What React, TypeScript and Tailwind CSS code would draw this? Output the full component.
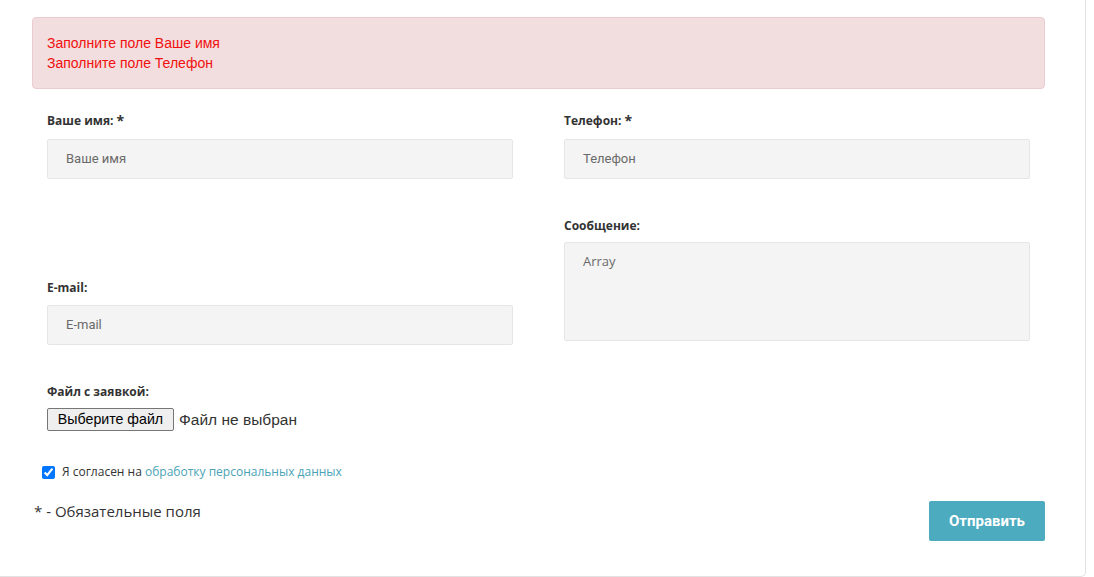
import React from "react";

const labelCls =
  "block h-[18px] leading-[18px] text-[12px] font-bold text-[#333] [font-family:'Open_Sans',sans-serif]";
const inputCls =
  "h-[40px] w-full bg-[#f4f4f4] border border-[#e6e6e6] rounded-[2px] px-[18px] flex items-center text-[13px] text-[#6a6a6a] [font-family:Roboto,sans-serif]";

function Star() {
  return <span className="text-[14px] font-bold align-[-1px] ml-[3px]">*</span>;
}

export default function App() {
  return (
    <div className="w-[1094px] h-[577px] bg-white overflow-hidden">
      <div className="w-[1086px] h-[577px] border-r border-b border-[#e2e2e2] rounded-br-[5px] pl-[32px] pr-[40px] pt-[17px]">
        <div className="h-[72px] bg-[#f2dede] border border-[#ebccd1] rounded-[4px] px-[14px] pt-[15px] text-[14px] leading-[20px] text-[#f01010] [font-family:Arial,'Liberation_Sans',sans-serif]">
          <div>Заполните поле Ваше имя</div>
          <div>Заполните поле Телефон</div>
        </div>

        <div className="px-[15px] pt-[23px] grid grid-cols-[466px_466px] gap-x-[51px]">
          <div className="flex flex-col">
            <label className={labelCls}>
              Ваше имя:<Star />
            </label>
            <div className={inputCls + " mt-[9px]"}>Ваше имя</div>
            <label className={labelCls + " mt-[100px]"}>E-mail:</label>
            <div className={inputCls + " mt-[8px]"}>E-mail</div>
            <label className={labelCls + " mt-[38px]"}>Файл с заявкой:</label>
            <div className="mt-[7px] flex items-center gap-[5px] [font-family:Arial,'Liberation_Sans',sans-serif]">
              <span className="h-[23px] w-[127px] flex items-center justify-center border border-[#767676] bg-[#efefef] rounded-[2px] text-black text-[14.2px]">
                Выберите файл
              </span>
              <span className="text-[#333] text-[15.5px]">Файл не выбран</span>
            </div>
          </div>
          <div className="flex flex-col">
            <label className={labelCls}>
              Телефон:<Star />
            </label>
            <div className={inputCls + " mt-[9px]"}>Телефон</div>
            <label className={labelCls + " mt-[38px]"}>Сообщение:</label>
            <div className="mt-[7px] h-[99px] w-full bg-[#f4f4f4] border border-[#e6e6e6] rounded-[2px] px-[18px] pt-[9px] text-[13px] text-[#6a6a6a] [font-family:'Open_Sans',sans-serif]">
              Array
            </div>
          </div>
        </div>

        <div className="mt-[32px] ml-[10px] flex items-center gap-[7px] text-[12px] text-[#333] [font-family:'Open_Sans',sans-serif]">
          <input type="checkbox" defaultChecked className="w-[13px] h-[13px] m-0" />
          <span>
            Я согласен на{" "}
            <a className="text-[#4aa3b5]" href="#">
              обработку персональных данных
            </a>
          </span>
        </div>

        <div className="mt-[14px] flex justify-between items-start">
          <div className="pl-[2px] pt-[5px] text-[15px] text-[#333] [font-family:'Open_Sans',sans-serif]">
            *&nbsp;- Обязательные поля
          </div>
          <button className="mt-[6px] w-[116px] h-[40px] bg-[#4cabbe] rounded-[2px] text-white text-[15px] font-bold [font-family:Roboto,sans-serif]">
            Отправить
          </button>
        </div>
      </div>
    </div>
  );
}
